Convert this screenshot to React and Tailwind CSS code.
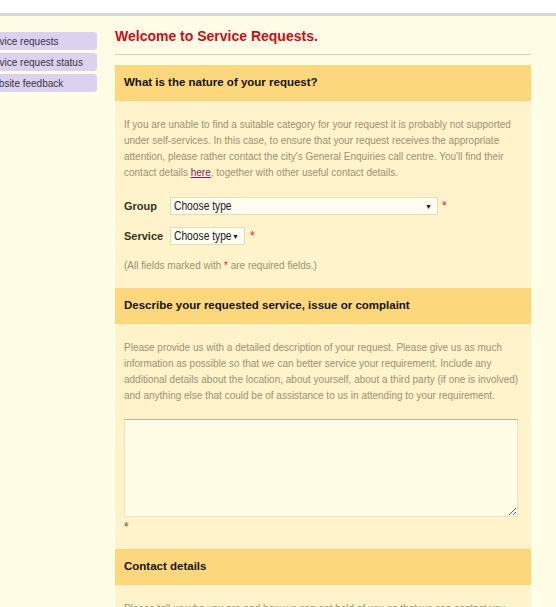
import { useState } from 'react';

const SIDE_LINKS = ['Service requests', 'Service request status', 'Website feedback'];

function SectionHeader({ children }) {
  return (
    <div className="h-[36px] flex items-center px-[9px] bg-[#fdd77c] text-[11.5px] font-bold text-[#161208]">
      {children}
    </div>
  );
}

function FakeSelect({ width }) {
  return (
    <div
      className={`h-[18px] ${width} flex items-center justify-between pl-[3px] pr-[5px] bg-[#fffdf0] border border-[#e6dcb8] whitespace-nowrap text-[#1a1a1a]`}
    >
      {/* narrow font look: squeeze a regular face */}
      <span className="block w-[56px] text-[12.5px] leading-none">
        <span className="inline-block origin-left scale-x-[0.82]">Choose type</span>
      </span>
      <span className="text-[7px] leading-none">▼</span>
    </div>
  );
}

export default function App() {
  const [description, setDescription] = useState('');

  return (
    <div className="min-h-[607px] bg-[#fffde6] font-['Liberation_Sans',Arial,sans-serif]">
      <div className="h-[13px] bg-white" />
      <div className="h-[3px] bg-[#d9d9d6]" />

      <div className="flex">
        {/* side nav, cut off at the left edge of the window */}
        <div className="w-[97px] shrink-0 overflow-hidden pt-[16px]">
          <div className="-ml-[19px] flex flex-col gap-[3px]">
            {SIDE_LINKS.map(link => (
              <div
                key={link}
                className="h-[18px] w-[116px] flex items-center pl-[3px] rounded-[3px] bg-[#dcd1ee] text-[10px] text-[#3a3448] whitespace-nowrap"
              >
                {link}
              </div>
            ))}
          </div>
        </div>

        <div className="ml-[18px] w-[416px]">
          <div className="pt-[10px] h-[39px] border-b border-[#d3cebd]">
            <h1 className="h-[20px] flex items-center text-[14px] font-bold text-[#d10a1c]">Welcome to Service Requests.</h1>
          </div>

          <div className="mt-[10px]">
            <SectionHeader>What is the nature of your request?</SectionHeader>
            <div className="bg-[#fff3cc] px-[9px] pt-[16px] pb-[14px]">
              <p className="text-[10px] leading-[16px] text-[#9e916f] whitespace-nowrap">
                If you are unable to find a suitable category for your request it is probably not supported
                <br />
                under self-services. In this case, to ensure that your request receives the appropriate
                <br />
                attention, please rather contact the city's General Enquiries call centre. You'll find their
                <br />
                contact details <a href="#" className="text-[#8b1a6b] underline">here</a>, together with other useful contact details.
              </p>

              <div className="mt-[16px] flex items-center">
                <span className="w-[46px] text-[11px] font-bold text-[#3a3222]">Group</span>
                <FakeSelect width="w-[268px]" />
                <span className="ml-[4px] text-[12px] text-[#e0202a]">*</span>
              </div>
              <div className="mt-[12px] flex items-center">
                <span className="w-[46px] text-[11px] font-bold text-[#3a3222]">Service</span>
                <FakeSelect width="w-[75px]" />
                <span className="ml-[5px] text-[12px] text-[#e0202a]">*</span>
              </div>

              <p className="mt-[13px] text-[10px] leading-[16px] text-[#9e916f]">
                (All fields marked with <span className="text-[#e0202a]">*</span> are required fields.)
              </p>
            </div>
          </div>

          <SectionHeader>Describe your requested service, issue or complaint</SectionHeader>
          <div className="bg-[#fff3cc] px-[9px] pt-[16px] pb-[14px]">
            <p className="text-[10px] leading-[16px] text-[#9e916f] whitespace-nowrap">
              Please provide us with a detailed description of your request. Please give us as much
              <br />
              information as possible so that we can better service your requirement. Include any
              <br />
              additional details about the location, about yourself, about a third party (if one is involved)
              <br />
              and anything else that could be of assistance to us in attending to your requirement.
            </p>
            <textarea
              value={description}
              onChange={e => setDescription(e.target.value)}
              className="mt-[15px] block w-[394px] h-[98px] bg-[#fffde6] border border-[#ece4c8] border-t-[#b9b3a0] outline-none text-[11px]"
            />
            <div className="mt-[2px] h-[16px] text-[12px] leading-[16px] text-[#e0202a]">*</div>
          </div>

          <SectionHeader>Contact details</SectionHeader>
          <div className="bg-[#fff3cc] px-[9px] pt-[16px] pb-[14px]">
            <p className="text-[10px] leading-[16px] text-[#9e916f] whitespace-nowrap">
              Please tell us who you are and how we can get hold of you so that we can contact you
            </p>
          </div>
        </div>
      </div>
    </div>
  );
}
